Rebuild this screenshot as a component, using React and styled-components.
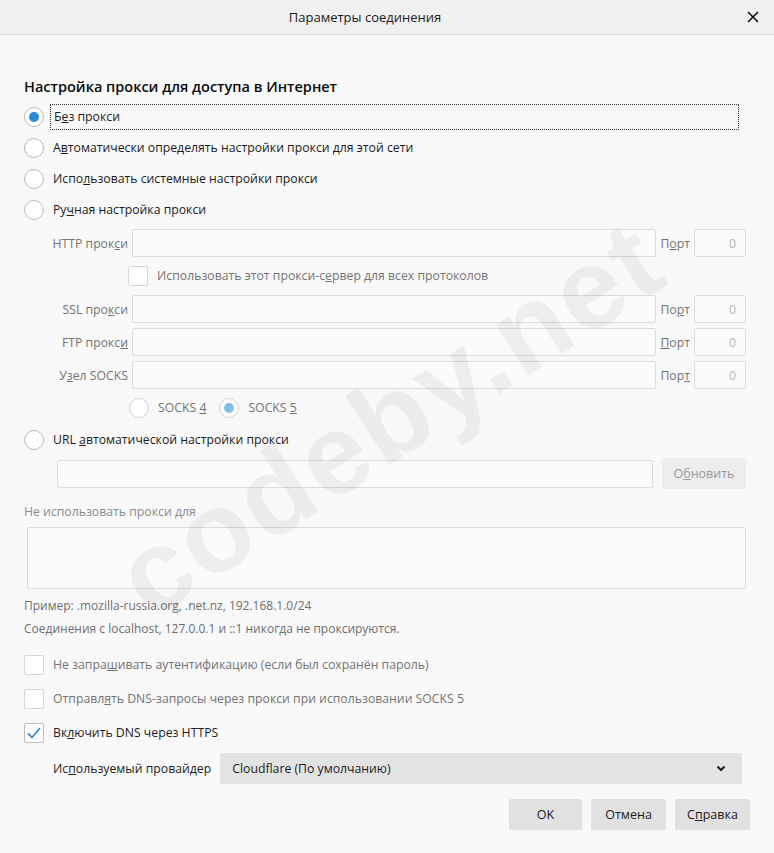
import React from "react";
import styled, { createGlobalStyle } from "styled-components";

const GlobalStyle = createGlobalStyle`
  html, body {
    margin: 0;
    padding: 0;
    background: #f9f9fa;
  }
  body {
    font-family: "Open Sans", "Noto Sans", sans-serif;
    color: #0c0c0d;
  }
`;

const Dialog = styled.div`
  position: relative;
  width: 774px;
  height: 853px;
  overflow: hidden;
  background: #f9f9fa;
  display: flex;
  flex-direction: column;
`;

const TitleBar = styled.div`
  height: 34px;
  flex: none;
  display: flex;
  align-items: center;
  justify-content: center;
  padding-right: 44px;
  position: relative;
  background: #f0f0f0;
  border-bottom: 1px solid #dadada;
  font-size: 13px;
  color: #1a1a1a;
`;

const CloseBtn = styled.div`
  position: absolute;
  right: 14px;
  top: 10px;
  width: 14px;
  height: 14px;
  display: flex;
`;

const Body = styled.div`
  padding: 42px 24px 0 24px;
  display: flex;
  flex-direction: column;
  font-size: 12.25px;
`;

const Heading = styled.div`
  font-size: 14.5px;
  font-weight: 600;
  line-height: 20px;
  margin-bottom: 3px;
`;

const RadioRow = styled.div`
  display: flex;
  align-items: center;
  height: 31px;
  width: 712px;
  gap: 9px;
  margin-top: ${(p) => p.$mt || 0}px;
`;

const Radio = styled.span`
  flex: none;
  width: 18px;
  height: 18px;
  border-radius: 50%;
  border: 1px solid ${(p) => (p.$disabled ? "#d4d4d6" : "#b9b9bb")};
  background: #fff;
  display: flex;
  align-items: center;
  justify-content: center;
  margin-left: ${(p) => p.$ml || 0}px;
  &::after {
    content: "";
    display: ${(p) => (p.$checked ? "block" : "none")};
    width: 10px;
    height: 10px;
    border-radius: 50%;
    background: ${(p) => (p.$disabled ? "#86bde6" : "#2a8ad6")};
  }
`;

const Label = styled.span`
  color: ${(p) => (p.$disabled ? "#737373" : "#1b1b1b")};
  white-space: nowrap;
  line-height: 20px;
  ${(p) =>
    p.$focused &&
    `
    flex: 1;
    outline: 1px dotted #333;
    outline-offset: 2px;
    padding-left: 1px;
  `}
`;

const ManualGrid = styled.div`
  margin-top: 4px;
  display: grid;
  grid-template-columns: 104px 524px 30px 52px;
  grid-auto-rows: 28px;
  column-gap: 4px;
  row-gap: 5px;
  color: #737373;
`;

const FieldLabel = styled.span`
  text-align: right;
  align-self: center;
  white-space: nowrap;
  color: #737373;
`;

const TextInput = styled.div`
  box-sizing: border-box;
  height: 28px;
  width: ${(p) => (p.$w ? `${p.$w}px` : "auto")};
  border: 1px solid #dcdcde;
  border-radius: 2px;
  background: #fbfbfb;
  display: flex;
  align-items: center;
  justify-content: flex-end;
  padding-right: 9px;
  color: #b4b4b4;
`;

const SpanRow = styled.div`
  grid-column: 1 / -1;
  display: flex;
  align-items: center;
  padding-left: ${(p) => p.$pad}px;
  gap: 9px;
`;

const CheckBox = styled.span`
  flex: none;
  box-sizing: border-box;
  width: 20px;
  height: 20px;
  border: 1px solid ${(p) => (p.$disabled ? "#d6d6d8" : "#bdbdbf")};
  border-radius: 2px;
  background: #fff;
  display: flex;
  align-items: center;
  justify-content: center;
`;

const UrlRow = styled.div`
  display: flex;
  align-items: center;
  margin-top: 3px;
  padding-left: 33px;
  gap: 9px;
  height: 31px;
`;

const Button = styled.div`
  box-sizing: border-box;
  width: ${(p) => p.$w}px;
  height: 31px;
  border-radius: 2px;
  background: ${(p) => (p.$disabled ? "#ededed" : "#e1e1e2")};
  color: ${(p) => (p.$disabled ? "#9a9a9a" : "#1b1b1b")};
  display: flex;
  align-items: center;
  justify-content: center;
  font-size: 12.5px;
`;

const GreyLine = styled.div`
  color: ${(p) => p.$c || "#8a8a8a"};
  font-size: ${(p) => p.$fs || 12.25}px;
  line-height: 20px;
  margin-top: ${(p) => p.$mt || 0}px;
`;

const TextArea = styled.div`
  box-sizing: border-box;
  margin: 5px 0 0 3px;
  width: 719px;
  height: 62px;
  border: 1px solid #dcdcde;
  border-radius: 2px;
  background: #fbfbfb;
`;

const CheckRow = styled.div`
  display: flex;
  align-items: center;
  height: 34px;
  gap: 9px;
  margin-top: ${(p) => p.$mt || 0}px;
`;

const ProviderRow = styled.div`
  display: flex;
  align-items: center;
  margin-top: 3px;
  padding-left: 29px;
  gap: 9px;
`;

const Select = styled.div`
  box-sizing: border-box;
  width: 522px;
  height: 31px;
  border-radius: 2px;
  background: #e3e3e4;
  display: flex;
  align-items: center;
  justify-content: space-between;
  padding: 0 16px 0 12px;
  color: #1b1b1b;
`;

const Footer = styled.div`
  display: flex;
  justify-content: flex-end;
  gap: 9px;
  margin-top: 15px;
`;

const Watermark = styled.div`
  position: absolute;
  left: 390px;
  top: 418px;
  transform: translate(-50%, -50%) rotate(-33deg);
  font-family: "Liberation Sans", Arial, sans-serif;
  font-weight: 700;
  font-size: 114px;
  letter-spacing: 3px;
  color: rgba(0, 0, 0, 0.05);
  white-space: nowrap;
  pointer-events: none;
`;

const Check = () => (
  <svg width="16" height="14" viewBox="0 0 16 14">
    <path d="M2 7.5 L6 11.5 L14 2" fill="none" stroke="#3a8ed3" strokeWidth="1.8" />
  </svg>
);

const Chevron = () => (
  <svg width="10" height="7" viewBox="0 0 10 7">
    <path d="M1.5 1.5 L5 5 L8.5 1.5" fill="none" stroke="#1b1b1b" strokeWidth="2" />
  </svg>
);

const rows = [
  { label: <>HTTP прок<u>с</u>и</>, port: <>П<u>о</u>рт</> },
  null,
  { label: <>SSL про<u>к</u>си</>, port: <>По<u>р</u>т</> },
  { label: <>FTP прокс<u>и</u></>, port: <><u>П</u>орт</> },
  { label: <>У<u>з</u>ел SOCKS</>, port: <>Пор<u>т</u></> },
];

export default function App() {
  return (
    <>
      <GlobalStyle />
      <Dialog>
        <TitleBar>
          Параметры соединения
          <CloseBtn>
            <svg width="14" height="14" viewBox="0 0 14 14">
              <path d="M2 2 L12 12 M12 2 L2 12" stroke="#111" strokeWidth="1.6" />
            </svg>
          </CloseBtn>
        </TitleBar>
        <Body>
          <Heading>Настройка прокси для доступа в Интернет</Heading>
          <RadioRow $mt={1}>
            <Radio $checked />
            <Label $focused>Б<u>е</u>з прокси</Label>
          </RadioRow>
          <RadioRow>
            <Radio />
            <Label>А<u>в</u>томатически определять настройки прокси для этой сети</Label>
          </RadioRow>
          <RadioRow>
            <Radio />
            <Label>Испо<u>л</u>ьзовать системные настройки прокси</Label>
          </RadioRow>
          <RadioRow>
            <Radio />
            <Label>Ру<u>ч</u>ная настройка прокси</Label>
          </RadioRow>

          <ManualGrid>
            {rows.map((r, i) =>
              r ? (
                <React.Fragment key={i}>
                  <FieldLabel>{r.label}</FieldLabel>
                  <TextInput />
                  <FieldLabel>{r.port}</FieldLabel>
                  <TextInput>0</TextInput>
                </React.Fragment>
              ) : (
                <SpanRow key={i} $pad={104}>
                  <CheckBox $disabled />
                  <Label $disabled>Использовать этот прокси-с<u>е</u>рвер для всех протоколов</Label>
                </SpanRow>
              )
            )}
            <SpanRow $pad={105}>
              <Radio $disabled />
              <Label $disabled>SOCKS <u>4</u></Label>
              <Radio $disabled $checked $ml={4} />
              <Label $disabled>SOCKS <u>5</u></Label>
            </SpanRow>
          </ManualGrid>

          <RadioRow $mt={2}>
            <Radio />
            <Label>URL <u>а</u>втоматической настройки прокси</Label>
          </RadioRow>
          <UrlRow>
            <TextInput $w={596} />
            <Button $w={84} $disabled>
              О<u>б</u>новить
            </Button>
          </UrlRow>

          <GreyLine $mt={13}>Не использовать прокси для</GreyLine>
          <TextArea />
          <GreyLine $mt={7} $fs={12} $c="#6e6e6e">
            Пример: .mozilla-russia.org, .net.nz, 192.168.1.0/24
          </GreyLine>
          <GreyLine $mt={3} $fs={12} $c="#6e6e6e">
            Соединения с localhost, 127.0.0.1 и ::1 никогда не проксируются.
          </GreyLine>

          <CheckRow $mt={9}>
            <CheckBox $disabled />
            <Label $disabled>Не запра<u>ш</u>ивать аутентификацию (если был сохранён пароль)</Label>
          </CheckRow>
          <CheckRow>
            <CheckBox $disabled />
            <Label $disabled>Отправл<u>я</u>ть DNS-запросы через прокси при использовании SOCKS 5</Label>
          </CheckRow>
          <CheckRow>
            <CheckBox>
              <Check />
            </CheckBox>
            <Label>Вк<u>л</u>ючить DNS через HTTPS</Label>
          </CheckRow>

          <ProviderRow>
            <Label>Ис<u>п</u>ользуемый провайдер</Label>
            <Select>
              Cloudflare (По умолчанию)
              <Chevron />
            </Select>
          </ProviderRow>

          <Footer>
            <Button $w={73}>OK</Button>
            <Button $w={75}>Отмена</Button>
            <Button $w={75}>
              С<u>п</u>равка
            </Button>
          </Footer>
        </Body>
        <Watermark>codeby.net</Watermark>
      </Dialog>
    </>
  );
}
